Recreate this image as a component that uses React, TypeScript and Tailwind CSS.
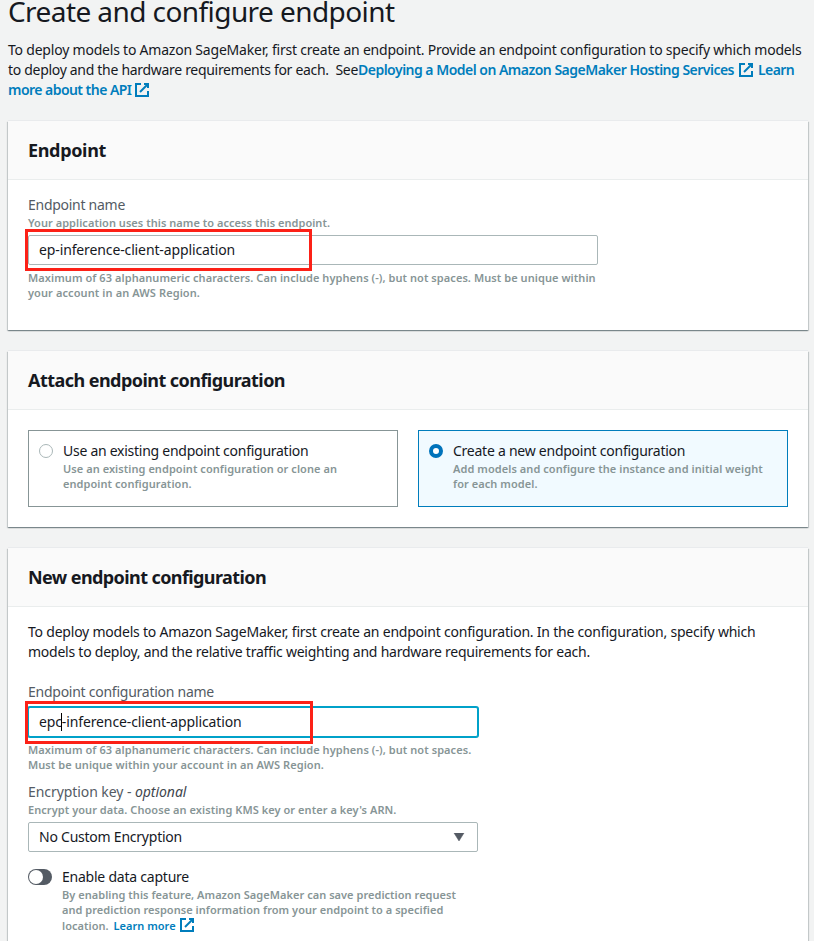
import type { ReactNode } from "react";

function Line({ className = "", children }: { className?: string; children: ReactNode }) {
  return <div className={`whitespace-pre ${className}`}>{children}</div>;
}

function Hint({ className = "", children }: { className?: string; children: ReactNode }) {
  return (
    <div className={`text-[11px] leading-[15px] font-semibold text-[#879596] ${className}`}>
      {children}
    </div>
  );
}

function ExternalIcon({ className = "" }: { className?: string }) {
  return (
    <svg
      className={`h-4 w-4 shrink-0 ${className}`}
      viewBox="0 0 16 16"
      fill="none"
      stroke="#007dbc"
      strokeWidth="2"
    >
      <path d="M10 2h4v4" />
      <path d="M6 10l8-8" />
      <path d="M14 9.05V14H2V2h5" />
    </svg>
  );
}

function Panel({ title, tracking, className = "", children }: { title: string; tracking: string; className?: string; children: ReactNode }) {
  return (
    <section
      className={`w-[800px] shrink-0 bg-white shadow-[0_1px_1px_0_rgba(0,28,36,0.3),1px_1px_1px_0_rgba(0,28,36,0.15),-1px_1px_1px_0_rgba(0,28,36,0.15),0_-1px_0_0_#e9ebed] ${className}`}
    >
      <header className="flex h-[59px] items-center border-b border-[#eaeded] bg-[#fafafa] px-5">
        <h2 className={`text-[18px] leading-[22px] font-bold text-[#16191f] ${tracking}`}>{title}</h2>
      </header>
      {children}
    </section>
  );
}

export default function App() {
  return (
    <main className="flex h-[941px] w-[814px] flex-col overflow-hidden bg-[#f2f3f3] pl-2 font-['Noto_Sans','Open_Sans',sans-serif] text-[14px] leading-5 text-[#16191f]">
      <h1 className="h-[22px] shrink-0 text-[28px] leading-[22px] tracking-[-0.575px] whitespace-pre">
        Create and configure endpoint
      </h1>

      <div className="mt-[18px] h-[60px] shrink-0">
        <Line className="tracking-[-0.21px]">
          To deploy models to Amazon SageMaker, first create an endpoint. Provide an endpoint configuration to specify which models
        </Line>
        <Line className="flex items-center">
          <span className="tracking-[-0.304px]">{"to deploy and the hardware requirements for each.\u00a0 See"}</span>
          <a className="font-semibold tracking-[-0.514px] text-[#007dbc]">Deploying a Model on Amazon SageMaker Hosting Services</a>
          <ExternalIcon className="ml-1" />
          <a className="ml-1 font-semibold tracking-[-0.6px] text-[#007dbc]">Learn</a>
        </Line>
        <Line className="flex items-center">
          <a className="font-semibold tracking-[-0.54px] text-[#007dbc]">more about the API</a>
          <ExternalIcon className="ml-[3px]" />
        </Line>
      </div>

      <Panel title="Endpoint" tracking="tracking-[-0.334px]" className="mt-[21px] h-[209px]">
        <div className="px-5 pt-[15px]">
          <Line className="tracking-[-0.275px] text-[#545b64]">Endpoint name</Line>
          <Hint className="tracking-[0.04px]">
            <Line>Your application uses this name to access this endpoint.</Line>
          </Hint>
          <div className="relative mt-[5px] flex h-[30px] w-[570px] items-center rounded-[2px] border border-[#aab7b8] bg-white px-2.5">
            <span className="tracking-[-0.125px]">ep-inference-client-application</span>
            <div className="absolute -top-[7px] -left-1 h-[42px] w-[287px] border-3 border-[#fc2117]" />
          </div>
          <Hint className="mt-[5px]">
            <Line className="tracking-[0.065px]">
              Maximum of 63 alphanumeric characters. Can include hyphens (-), but not spaces. Must be unique within
            </Line>
            <Line className="tracking-[0.097px]">your account in an AWS Region.</Line>
          </Hint>
        </div>
      </Panel>

      <Panel title="Attach endpoint configuration" tracking="tracking-[-0.545px]" className="mt-[21px] h-[176px]">
        <div className="flex gap-5 px-5 pt-5">
          <div className="flex h-[77px] w-[370px] border border-[#879596] px-2.5 pt-2.5">
            <span className="mt-[3px] h-3.5 w-3.5 shrink-0 rounded-full border border-[#aab7b8] bg-white" />
            <div className="ml-2.5">
              <Line className="tracking-[-0.265px]">Use an existing endpoint configuration</Line>
              <Hint className="tracking-[0.055px]">
                <Line>Use an existing endpoint configuration or clone an</Line>
                <Line>endpoint configuration.</Line>
              </Hint>
            </div>
          </div>
          <div className="flex h-[77px] w-[370px] border border-[#007dbc] bg-[#f1faff] px-2.5 pt-2.5">
            <span className="mt-[3px] h-3.5 w-3.5 shrink-0 rounded-full border-4 border-[#0073bb] bg-white" />
            <div className="ml-2.5">
              <Line className="tracking-[-0.25px]">Create a new endpoint configuration</Line>
              <Hint className="tracking-[0.065px]">
                <Line>Add models and configure the instance and initial weight</Line>
                <Line>for each model.</Line>
              </Hint>
            </div>
          </div>
        </div>
      </Panel>

      <Panel title="New endpoint configuration" tracking="tracking-[-0.592px]" className="mt-[21px] h-[420px]">
        <div className="px-5 pt-[15px]">
          <Line className="tracking-[-0.214px]">
            To deploy models to Amazon SageMaker, first create an endpoint configuration. In the configuration, specify which
          </Line>
          <Line className="tracking-[-0.241px]">
            models to deploy, and the relative traffic weighting and hardware requirements for each.
          </Line>

          <Line className="mt-5 tracking-[-0.255px] text-[#545b64]">Endpoint configuration name</Line>
          <div className="relative mt-[5px] flex h-[30px] w-[450px] items-center rounded-[2px] border border-[#00a1c9] bg-white px-2.5 shadow-[0_0_0_1px_#00a1c9]">
            <span className="tracking-[-0.125px]">epc-inference-client-application</span>
            <div className="absolute top-[5px] left-[32px] h-[18px] w-px bg-black" />
            <div className="absolute -top-[7px] -left-1 h-[43px] w-[288px] border-3 border-[#fc2117]" />
          </div>
          <Hint className="mt-[5px] tracking-[0.069px]">
            <Line>Maximum of 63 alphanumeric characters. Can include hyphens (-), but not spaces.</Line>
            <Line>Must be unique within your account in an AWS Region.</Line>
          </Hint>

          <Line className="mt-2.5 text-[#545b64]">
            <span className="tracking-[-0.07px]">Encryption key - </span>
            <em className="tracking-[-0.05px] text-[#3f464e]">optional</em>
          </Line>
          <Hint className="tracking-[0.055px]">
            <Line>Encrypt your data. Choose an existing KMS key or enter a key's ARN.</Line>
          </Hint>
          <div className="mt-[5px] flex h-[30px] w-[450px] items-center justify-between rounded-[2px] border border-[#aab7b8] bg-white pr-3 pl-2.5">
            <span className="tracking-[-0.234px]">No Custom Encryption</span>
            <svg className="h-2 w-3" viewBox="0 0 12 8" fill="#545b64">
              <path d="M1 0h10l-5 8z" stroke="#545b64" strokeWidth="0.5" />
            </svg>
          </div>

          <div className="mt-[15px] flex">
            <span className="mt-0.5 flex h-4 w-6 shrink-0 items-center rounded-full bg-[#545b64] pl-px">
              <span className="h-3.5 w-3.5 rounded-full bg-white" />
            </span>
            <div className="ml-2.5">
              <Line className="tracking-[-0.229px]">Enable data capture</Line>
              <Hint className="tracking-[0.038px]">
                <Line>By enabling this feature, Amazon SageMaker can save prediction request</Line>
                <Line>and prediction response information from your endpoint to a specified</Line>
                <Line className="flex items-center">
                  <span>{"location.  "}</span>
                  <a className="-ml-px text-[#007dbc]">Learn more</a>
                  <ExternalIcon className="ml-[3px]" />
                </Line>
              </Hint>
            </div>
          </div>
        </div>
      </Panel>
    </main>
  );
}
